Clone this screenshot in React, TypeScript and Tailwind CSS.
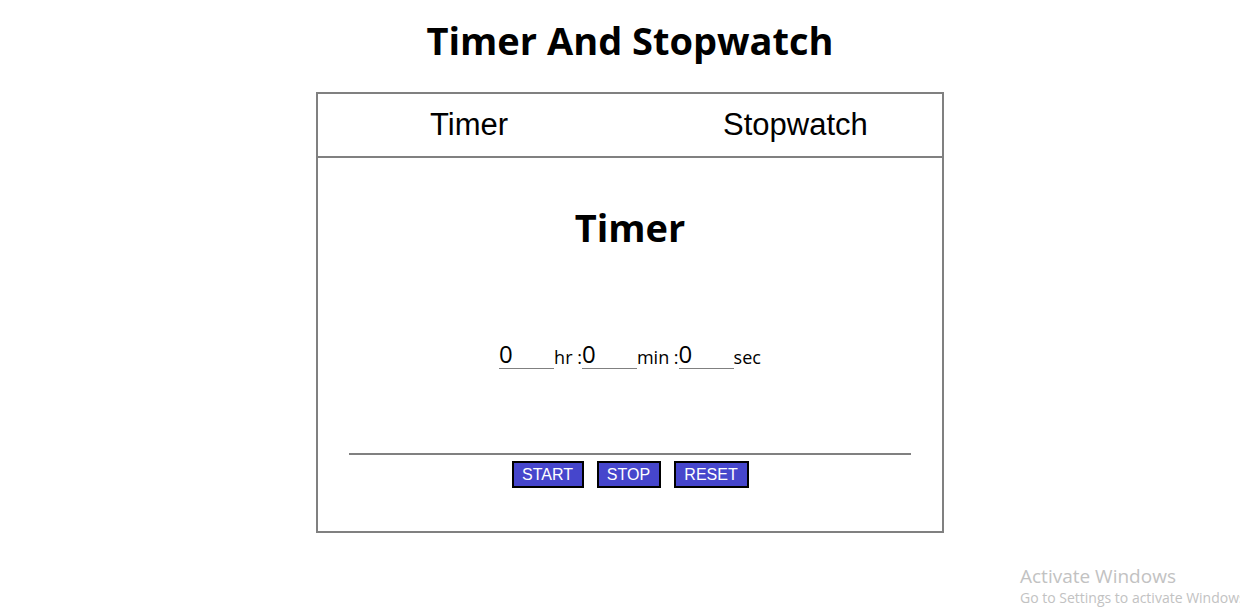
import { useState } from 'react';

export default function App() {
  const [tab, setTab] = useState<'timer' | 'stopwatch'>('timer');
  const [hr, setHr] = useState('0');
  const [min, setMin] = useState('0');
  const [sec, setSec] = useState('0');

  return (
    <div className="relative min-h-[607px] w-full overflow-hidden bg-white pl-[20px] font-['Open_Sans',sans-serif] text-black">
      <h1 className="pt-[14px] text-center text-[38px] font-bold leading-[52px]">Timer And Stopwatch</h1>

      <div className="mx-auto mt-[26px] w-[628px] border-2 border-[#808080]">
        {/* tabs */}
        <div className="flex h-[64px] items-center border-b-2 border-[#808080] pl-[112px] font-['Liberation_Sans',Arial,sans-serif] text-[31px]">
          <button onClick={() => setTab('timer')} className="cursor-pointer">Timer</button>
          <button onClick={() => setTab('stopwatch')} className="ml-[215px] cursor-pointer">Stopwatch</button>
        </div>

        <div className="flex flex-col items-center px-[31px]">
          <h2 className="mt-[43px] text-[38px] font-bold leading-[52px]">{tab === 'timer' ? 'Timer' : 'Stopwatch'}</h2>

          <div className="mt-[86px] flex items-end text-[18px] leading-[24px]">
            <input
              value={hr}
              onChange={(e) => setHr(e.target.value)}
              className="w-[55px] border-b border-[#808080] text-[24px] leading-[29px] outline-none"
            />
            <span>hr :</span>
            <input
              value={min}
              onChange={(e) => setMin(e.target.value)}
              className="w-[55px] border-b border-[#808080] text-[24px] leading-[29px] outline-none"
            />
            <span>min :</span>
            <input
              value={sec}
              onChange={(e) => setSec(e.target.value)}
              className="w-[55px] border-b border-[#808080] text-[24px] leading-[29px] outline-none"
            />
            <span>sec</span>
          </div>

          <div className="mt-[84px] h-[2px] w-full bg-[#808080]" />

          <div className="mt-[6px] mb-[43px] flex gap-[13px] font-['Liberation_Sans',Arial,sans-serif] text-[16px] leading-[22px] text-white">
            <button className="h-[27px] w-[72px] border-2 border-black bg-[#4646cc]">START</button>
            <button className="h-[27px] w-[64px] border-2 border-black bg-[#4646cc]">STOP</button>
            <button className="h-[27px] w-[75px] border-2 border-black bg-[#4646cc]">RESET</button>
          </div>
        </div>
      </div>

      {/* windows watermark */}
      <div className="pointer-events-none absolute left-[1020px] top-[564px] whitespace-nowrap text-[#c2c2c2]">
        <div className="text-[19px] leading-[24px]">Activate Windows</div>
        <div className="text-[14px] leading-[20px]">Go to Settings to activate Windows.</div>
      </div>
    </div>
  );
}
